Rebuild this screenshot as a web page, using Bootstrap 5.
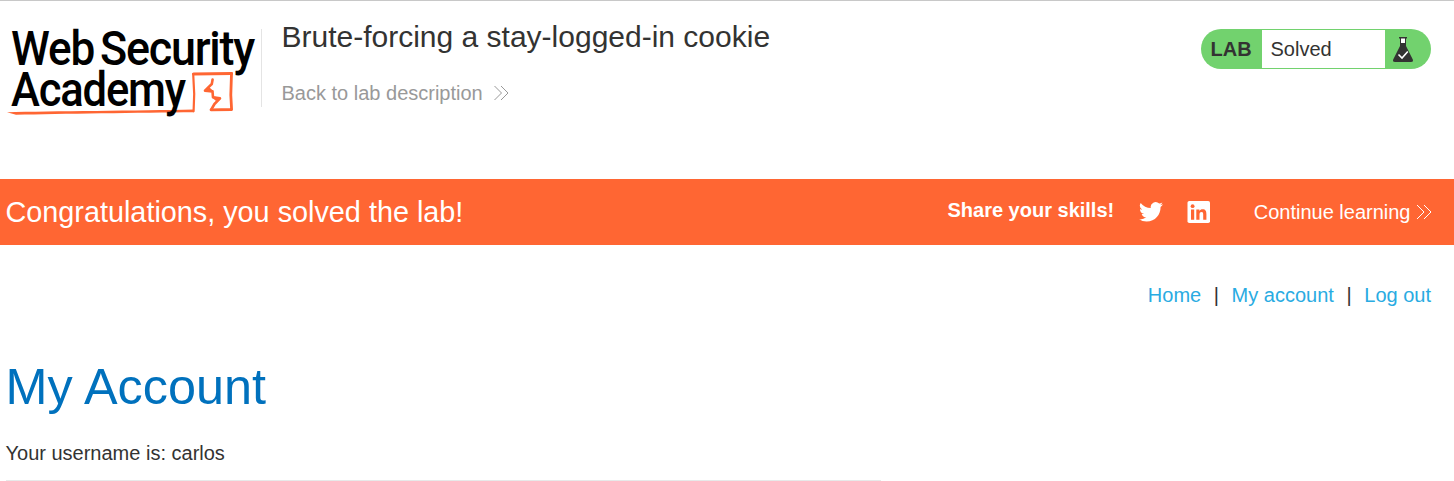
<!DOCTYPE html>
<html lang="en">
<head>
<meta charset="utf-8">
<title>Brute-forcing a stay-logged-in cookie</title>
<link href="https://cdn.jsdelivr.net/npm/bootstrap@5.3.0/dist/css/bootstrap.min.css" rel="stylesheet">
<style>
body{font-family:"Liberation Sans",Arial,sans-serif;font-size:20px;line-height:24px;color:#333332;background:#fff;overflow:hidden}
a{text-decoration:none}
svg{display:block;flex:none}
.academy-logo{overflow:visible}
.academy-logo text{letter-spacing:-1.3px}
.lab-header{height:179px;border-top:1px solid #c8c8c8}
.lab-intro{border-left:1px solid #e4e4e4;height:78px;margin-top:28px;padding-left:19.5px}
.lab-title{font-size:30px;line-height:36px;margin:-10px 0 0;font-weight:400}
.back-link{color:#999;margin-top:26px}
.status-pill{height:40px;width:230px;margin:28px 23px 0 0;border-radius:20px;background:#72d26e;overflow:hidden;padding:1px 0}
.status-name{width:61px;padding-left:9.5px;line-height:38px}
.status-text{width:123px;padding-left:8.5px;line-height:38px}
.solved-bar{height:66px;background:#f63;color:#fff;padding:0 22.5px 0 5.5px}
.solved-text{font-size:28.8px}
.share-text{position:relative;top:-2px}
.top-links{padding:38px 23px 0 0;gap:12.600px}
.top-links a{color:#29abe2}
.page-title{font-size:50.400px;line-height:60px;color:#0071bd;font-weight:400;margin:50px 0 0 5.500px}
.user-line{margin:24px 0 0 5.500px}
.rule{width:875px;margin:15px 0 0 6px;border-top:1px solid #e7e9e9}
</style>
</head>
<body>
<header class="lab-header d-flex align-items-start">
  <svg class="academy-logo" width="261" height="125" viewBox="0 1 261 125" role="img" aria-label="Web Security Academy">
    <g fill="none" stroke="#f63" stroke-linejoin="round" stroke-linecap="round">
      <path stroke-width="2.2" d="M193.600 111.200L194.200 94 193.200 74"/>
      <path stroke-width="3" d="M193.500 74L231.500 73.400"/>
      <path stroke-width="2.800" d="M231.500 73.500L230.800 95 231.600 109.500 211 109.800"/>
      <path stroke-width="2.600" d="M211.300 109.500L214.500 104 220 98.400 213 97.300 212.500 91.400 205 90.600 211.800 84 212.600 79.500"/>
      <path stroke-width="1.600" fill="#f63" d="M205 90.600L212.500 91.400 209 88zM213 97.300L220 98.400 216 100z"/>
    </g>
    <path fill="#f63" d="M7 112.300C50 111.200 140 110.800 194 109.600L194 112.300C140 112.800 60 113.800 16 114.800Z"/>
    <g font-family="Roboto, sans-serif" font-weight="500" font-size="48" fill="#000">
      <text x="11" y="65" textLength="83" lengthAdjust="spacingAndGlyphs">Web</text>
      <text x="100" y="65" textLength="154" lengthAdjust="spacingAndGlyphs">Security</text>
      <text x="11" y="106" textLength="174" lengthAdjust="spacingAndGlyphs">Academy</text>
    </g>
  </svg>
  <div class="lab-intro flex-grow-1">
    <h1 class="lab-title">Brute-forcing a stay-logged-in cookie</h1>
    <a class="back-link d-flex align-items-center" href="#">Back to lab description
      <svg class="ms-2" width="20" height="18" viewBox="0 0 20 18" fill="none" stroke="#999" stroke-width="1"><path d="M3.500 2l7 7-7 7M10 2l7 7-7 7"/></svg>
    </a>
  </div>
  <div class="status-pill d-flex">
    <div class="status-name fw-bold">LAB</div>
    <div class="status-text bg-white">Solved</div>
    <svg width="46" height="38" viewBox="1385 30 46 38">
      <path fill="#333332" d="M1399 37h8v1.500h-1V46l6.800 13.500q.8 2.500-1.800 2.500h-16q-2.600 0-1.800-2.500L1400 46v-7.500h-1z"/>
      <path fill="#fff" d="M1401 38.500h4V43h-4z"/>
      <path d="M1398.500 54.500l3.500 3.500 5.800-6.500" fill="none" stroke="#fff" stroke-width="1.600"/>
    </svg>
  </div>
</header>
<section class="solved-bar d-flex align-items-center">
  <div class="solved-text me-auto">Congratulations, you solved the lab!</div>
  <div class="share-text fw-bold">Share your skills!</div>
  <svg style="margin-left:25px" width="24" height="24" viewBox="0 0 24 24" fill="#fff"><path d="M24 4.370a9.600 9.600 0 0 1-2.830.780 4.940 4.940 0 0 0 2.170-2.730 9.700 9.700 0 0 1-3.130 1.200 4.920 4.920 0 0 0-8.390 4.490A13.980 13.980 0 0 1 1.670 2.960a4.930 4.930 0 0 0 1.520 6.570 4.900 4.900 0 0 1-2.230-.610v.060a4.930 4.930 0 0 0 3.950 4.830 4.900 4.900 0 0 1-2.220.080 4.930 4.930 0 0 0 4.600 3.420A9.900 9.900 0 0 1 0 19.350a13.950 13.950 0 0 0 7.550 2.210c9.140 0 14.310-7.720 14-14.640A10 10 0 0 0 24 4.370z"/></svg>
  <svg style="margin-left:24px" width="24" height="24" viewBox="0 0 24 24">
    <rect x=".5" y="1" width="22.500" height="22" rx="1.800" fill="#fff"/>
    <path fill="#f63" d="M4 9.500h3.200v10.200H4zM9.300 9.500h3.100v1.400c.7-1.100 1.700-1.700 3.100-1.700 3.200 0 3.900 2.100 3.900 4.900v5.600h-3.200v-5c0-1.400-.1-2.800-1.700-2.800s-2 1.300-2 2.800v5H9.300z"/>
    <circle cx="5.600" cy="6.200" r="1.900" fill="#f63"/>
  </svg>
  <a class="text-white d-flex align-items-center" style="margin-left:42.5px" href="#">Continue learning
    <svg style="margin-left:3px" width="18" height="18" viewBox="0 0 18 18" fill="none" stroke="#fff" stroke-width="1"><path d="M3 2l7 7-7 7M10 2l7 7-7 7"/></svg>
  </a>
</section>
<nav class="top-links d-flex justify-content-end"><a href="#">Home</a><span>|</span><a href="#">My account</a><span>|</span><a href="#">Log out</a></nav>
<main>
  <h2 class="page-title">My Account</h2>
  <p class="user-line">Your username is: carlos</p>
  <div class="rule"></div>
</main>
</body>
</html>
